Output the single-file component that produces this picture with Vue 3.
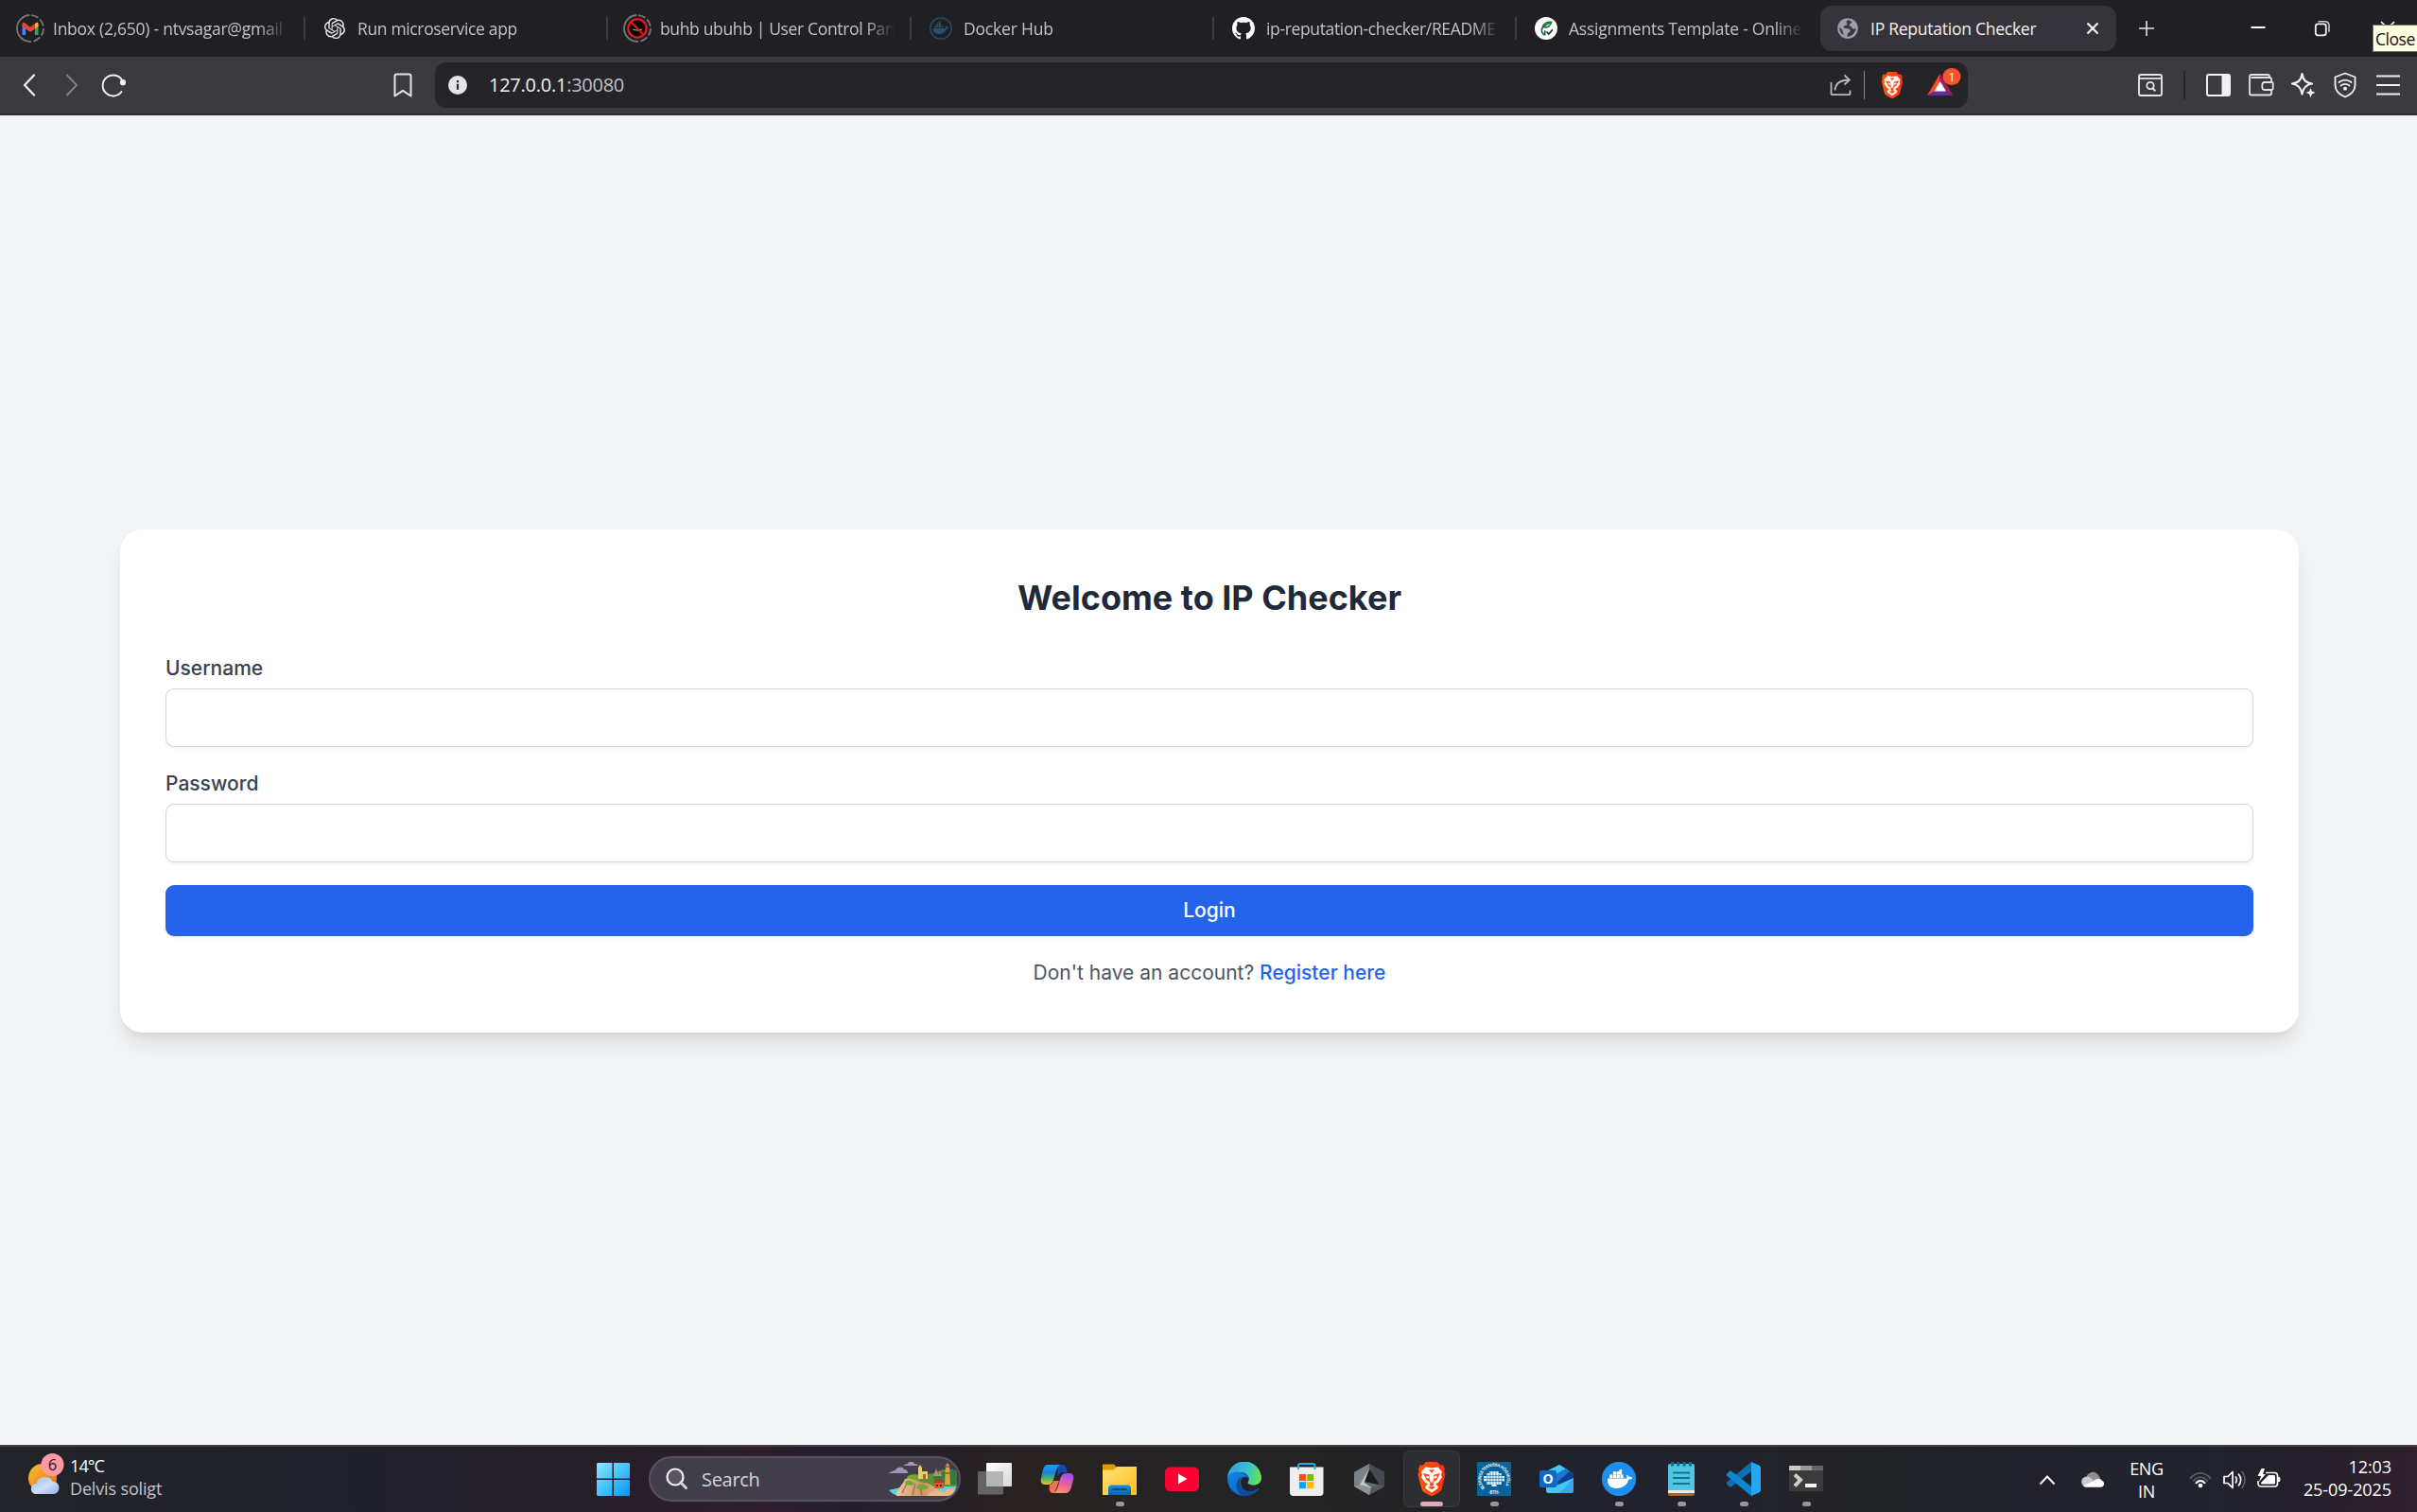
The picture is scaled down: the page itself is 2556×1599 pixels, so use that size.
<script setup>
const taskIndicator = { on: 'dot', active: 'dot wide' }
</script>

<template>
  <div class="screen">
    <!-- Tab strip -->
    <header class="tabs">
      <div class="tab">
        <svg class="fav ring" width="30" height="30" viewBox="0 0 30 30">
          <circle cx="15" cy="15" r="14" fill="none" stroke="#77767b" stroke-width="1.8" stroke-dasharray="8 2.4 8 2.4 8 2.4 8 2.4 44 2.4" transform="rotate(-86 15 15)" />
          <path d="M6.5 11v11h3.6v-8.500z" fill="#4285f4" /><path d="M23.500 11v11h-3.600v-8.500z" fill="#34a853" />
          <path d="M19.900 10.200l1.300-1.200c1.100-.6 2.300 0 2.300 1.500v2.200l-3.600 2.800z" fill="#fbbc04" />
          <path d="M6.500 12.700v-2.200c0-1.500 1.300-2.100 2.400-1.400L15 13.700l4.900-3.700v5.400L15 19.100l-4.900-3.600z" fill="#ea4335" />
        </svg>
        <span class="ttl fade t1">Inbox (2,650) - ntvsagar@gmail</span>
      </div>
      <i class="sep"></i>
      <div class="tab">
        <svg class="fav" width="24" height="24" viewBox="-1 -1 26 26"><path fill="#e8e8e8" d="M22.2819 9.8211a5.9847 5.9847 0 0 0-.5157-4.9108 6.0462 6.0462 0 0 0-6.5098-2.9A6.0651 6.0651 0 0 0 4.9807 4.1818a5.9847 5.9847 0 0 0-3.9977 2.9 6.0462 6.0462 0 0 0 .7427 7.0966 5.98 5.98 0 0 0 .511 4.9107 6.051 6.051 0 0 0 6.5146 2.9001A5.9847 5.9847 0 0 0 13.2599 24a6.0557 6.0557 0 0 0 5.7718-4.2058 5.9894 5.9894 0 0 0 3.9977-2.9001 6.0557 6.0557 0 0 0-.7475-7.0729zm-9.022 12.6081a4.4755 4.4755 0 0 1-2.8764-1.0408l.1419-.0804 4.7783-2.7582a.7948.7948 0 0 0 .3927-.6813v-6.7369l2.02 1.1686a.071.071 0 0 1 .038.052v5.5826a4.504 4.504 0 0 1-4.4945 4.4944zm-9.6607-4.1254a4.4708 4.4708 0 0 1-.5346-3.0137l.142.0852 4.783 2.7582a.7712.7712 0 0 0 .7806 0l5.8428-3.3685v2.3324a.0804.0804 0 0 1-.0332.0615L9.74 19.9502a4.4992 4.4992 0 0 1-6.1408-1.6464zM2.3408 7.8956a4.485 4.485 0 0 1 2.3655-1.9728V11.6a.7664.7664 0 0 0 .3879.6765l5.8144 3.3543-2.0201 1.1685a.0757.0757 0 0 1-.071 0l-4.8303-2.7865A4.504 4.504 0 0 1 2.3408 7.872zm16.5963 3.8558L13.1038 8.364 15.1192 7.2a.0757.0757 0 0 1 .071 0l4.8303 2.7913a4.4944 4.4944 0 0 1-.6765 8.1042v-5.6772a.79.79 0 0 0-.407-.667zm2.0107-3.0231l-.142-.0852-4.7735-2.7818a.7759.7759 0 0 0-.7854 0L9.409 9.2297V6.8974a.0662.0662 0 0 1 .0284-.0615l4.8303-2.7866a4.4992 4.4992 0 0 1 6.6802 4.66zM8.3065 12.863l-2.02-1.1638a.0804.0804 0 0 1-.038-.0567V6.0742a4.4992 4.4992 0 0 1 7.3757-3.4537l-.142.0805L8.704 5.459a.7948.7948 0 0 0-.3927.6813zm1.0976-2.3654l2.602-1.4998 2.6069 1.4998v2.9994l-2.5974 1.4997-2.6067-1.4997Z" /></svg>
        <span class="ttl fade t2">Run microservice app</span>
      </div>
      <i class="sep"></i>
      <div class="tab third">
        <svg class="fav ring" width="30" height="30" viewBox="0 0 30 30">
          <circle cx="15" cy="15" r="14" fill="none" stroke="#77767b" stroke-width="1.800" stroke-dasharray="8 2.4 8 2.4 8 2.4 8 2.4 44 2.4" transform="rotate(-86 15 15)" />
          <circle cx="15" cy="15" r="9.600" fill="#000" stroke="#f01414" stroke-width="2.200" />
          <path d="M9.500 15.300c3 1.600 8 1.600 11 0-1 3-9.500 3-11 0z" fill="#e8e8e8" /><path d="M8.500 8.500l13 13" stroke="#f01414" stroke-width="2.200" />
        </svg>
        <span class="ttl fade t3">buhb ubuhb | User Control Pane</span>
      </div>
      <i class="sep"></i>
      <div class="tab">
        <svg class="fav" width="24" height="24" viewBox="0 0 24 24">
          <circle cx="12" cy="12" r="11.200" fill="none" stroke="#24506c" stroke-width="1.300" />
          <path d="M3.500 12h13.200c.6-.6.5-2-.1-3 1.300.2 1.900 1.100 2 1.900.8-.1 1.500 0 2 .4-.5 1-1.500 1.300-2.600 1.300C17 15.900 14.500 18 10.500 18c-4.500 0-7-2.300-7-6zM5 9.200h2v2H5zM7.400 9.200h2v2h-2zM9.800 9.200h2v2h-2zM12.200 9.200h2v2h-2zM7.400 7h2v2h-2zM9.800 7h2v2h-2zM9.800 4.800h2v2h-2z" fill="#24506c" />
        </svg>
        <span class="ttl fade t4">Docker Hub</span>
      </div>
      <i class="sep"></i>
      <div class="tab">
        <svg class="fav" width="24" height="24" viewBox="0 0 16 16"><path fill="#fff" d="M8 0C3.580 0 0 3.580 0 8c0 3.540 2.290 6.530 5.470 7.590.4.070.55-.170.55-.380 0-.190-.010-.820-.010-1.490-2.010.370-2.530-.490-2.690-.940-.090-.230-.480-.940-.820-1.130-.280-.150-.680-.520-.010-.530.630-.010 1.080.580 1.230.820.720 1.210 1.870.870 2.330.660.070-.520.280-.870.510-1.070-1.780-.200-3.640-.890-3.640-3.950 0-.870.310-1.590.820-2.150-.080-.200-.360-1.020.080-2.120 0 0 .670-.210 2.200.820.640-.180 1.320-.270 2-.270s1.360.090 2 .270c1.530-1.040 2.200-.820 2.200-.820.440 1.100.160 1.920.080 2.120.510.560.820 1.270.820 2.150 0 3.070-1.870 3.750-3.650 3.950.290.250.540.730.540 1.480 0 1.070-.010 1.930-.010 2.200 0 .210.150.460.550.380A8.010 8.010 0 0 0 16 8c0-4.420-3.580-8-8-8z" /></svg>
        <span class="ttl fade t5">ip-reputation-checker/README</span>
      </div>
      <i class="sep"></i>
      <div class="tab">
        <svg class="fav" width="24" height="24" viewBox="0 0 24 24">
          <circle cx="12" cy="12" r="12" fill="#fff" />
          <path d="M10.500 19c-4-2-4.200-7-.5-9.500M8.500 10.500c1-4 5-6 9-5-.5 4-4.500 6.300-8.300 4.900M9.500 10.200c2-2.300 4-3.300 6.500-4M11.300 14.500c-1.200 1.700-1 3.200 0 4.500" fill="none" stroke="#12743c" stroke-width="1.700" />
          <path d="M12.500 15.500l2.400 2.600 4-4.800" fill="none" stroke="#222" stroke-width="1.600" />
        </svg>
        <span class="ttl fade t6">Assignments Template - Online</span>
      </div>
      <div class="active">
        <svg width="24" height="24" viewBox="0 0 24 24">
          <circle cx="12" cy="12" r="10.800" fill="#9aa0a6" />
          <path d="M12.500 3.200c-2 .8-2.300 2.100-1.500 3.500 1 1.500-.5 2.500-2.500 2.500-1.400 0-1 2.300.5 2.700 2.600.7 4.800-.3 5.500 2 .6 2-2.400 2.300-2.700 4.100-.2 1.300-.3 2-.4 2.800 4.500-.3 9.200-4 9.200-8.800-1.800.8-3.800.7-4.300-1-.5-1.600-3-.8-2.500-2.800.3-1.300 2-1.200 2.700-2.600-1-1.500-2.300-2.200-4-2.400zM3.200 11c1.600 1 3.800 2 3.400 4.300 0 1.300 1 1.700 1.100 4C4.900 17.800 3 14.500 3.200 11z" fill="#3a3940" />
        </svg>
        <span class="ttl t7">IP Reputation Checker</span>
        <svg class="tabx" width="14" height="14" viewBox="0 0 14 14"><path d="M1.500 1.500l11 11M12.500 1.500l-11 11" stroke="#f2f2f4" stroke-width="2.200" /></svg>
      </div>
      <svg class="plus" width="18" height="18" viewBox="0 0 18 18"><path d="M9 1v16M1 9h16" stroke="#e4e4e6" stroke-width="1.600" /></svg>
      <svg class="mini" width="16" height="24" viewBox="0 0 16 24"><path d="M0.500 11h15" stroke="#fff" stroke-width="2" /></svg>
      <svg class="rest" width="18" height="18" viewBox="0 0 18 18"><rect x="1.800" y="4.300" width="11" height="12" rx="2.500" fill="none" stroke="#f2f2f4" stroke-width="1.800" /><path d="M4.500 1.800h7c3 0 4.500 1.500 4.500 4.500v6.500" fill="none" stroke="#c8c8cc" stroke-width="1.600" /></svg>
      <svg class="wclose" width="16" height="16" viewBox="0 0 16 16"><path d="M1 1l14 14M15 1L1 15" stroke="#fff" stroke-width="1.700" /></svg>
      <div class="tip"><span>Close</span></div>
    </header>

    <!-- Address bar -->
    <nav class="bar">
      <svg class="back" width="14" height="24" viewBox="0 0 14 24"><path d="M12 1.500L2 12l10 10.500" fill="none" stroke="#f2f2f4" stroke-width="2.200" stroke-linecap="round" stroke-linejoin="round" /></svg>
      <svg class="fwd" width="14" height="24" viewBox="0 0 14 24"><path d="M2 1.500L12 12 2 22.500" fill="none" stroke="#7f7e84" stroke-width="2" stroke-linecap="round" stroke-linejoin="round" /></svg>
      <svg class="reload" width="28" height="26" viewBox="0 0 28 26"><path d="M22.500 8.500A11 11 0 1 0 21.500 20" fill="none" stroke="#f2f2f4" stroke-width="2" stroke-linecap="round" /><circle cx="23" cy="10.200" r="3.100" fill="#f2f2f4" /></svg>
      <svg class="mark" width="20" height="26" viewBox="0 0 20 26"><path d="M1.500 3.500c0-1.200.8-2 2-2h13c1.200 0 2 .8 2 2V24.500L10 18.800 1.500 24.500z" fill="none" stroke="#e4e4e6" stroke-width="2" stroke-linejoin="round" /></svg>
      <div class="url">
        <svg class="info" width="20" height="20" viewBox="0 0 20 20"><circle cx="10" cy="10" r="10" fill="#e3e3e8" /><path d="M10 8.800v6M10 5v2.200" stroke="#29282d" stroke-width="2.200" /></svg>
        <span class="addr">127.0.0.1<em>:30080</em></span>
        <svg class="share" width="24" height="24" viewBox="0 0 24 24"><path d="M1.500 9v11.500c0 1 .7 1.700 1.700 1.700h16.600c1 0 1.700-.7 1.700-1.700V17.500M5.500 17.500C6 10 11 6.500 20.500 6.500M15.500 1.500l5.300 5-5.300 5" fill="none" stroke="#b9b8be" stroke-width="1.800" /></svg>
        <i class="vline"></i>
        <svg class="brave" width="24" height="28" viewBox="0 0 30 36"><use href="#lion" /></svg>
        <svg class="bat" width="38" height="34" viewBox="0 0 38 34">
          <path d="M13.500 7L0 30l8.500-5 5-9z" fill="#ff4724" /><path d="M13.500 7L27.500 30 19 25l-5.500-9z" fill="#9e1f63" /><path d="M0 30h27.500L19 24.500H8.500z" fill="#662d91" /><path d="M13.700 15L20 25.500H7.400z" fill="#fff" />
          <rect x="16.500" y="1" width="19" height="18" rx="9" fill="#fc532a" />
          <text x="26" y="14.800" text-anchor="middle" font-size="13" fill="#fff">1</text>
        </svg>
      </div>
      <svg class="b1" width="28" height="26" viewBox="0 0 28 26"><rect x="2" y="2" width="24" height="22" rx="2" fill="none" stroke="#e4e4e6" stroke-width="1.900" /><path d="M2 6h24" stroke="#e4e4e6" stroke-width="1.800" /><circle cx="14" cy="13.500" r="3.700" fill="none" stroke="#e4e4e6" stroke-width="1.800" /><path d="M16.500 16.200l2.800 3" stroke="#e4e4e6" stroke-width="2" /></svg>
      <i class="vdark"></i>
      <svg class="b2" width="28" height="26" viewBox="0 0 28 26"><rect x="2" y="2" width="24" height="22" rx="2" fill="none" stroke="#f2f2f4" stroke-width="2" /><path d="M17.500 2H26v22h-8.500z" fill="#f2f2f4" /></svg>
      <svg class="b3" width="28" height="26" viewBox="0 0 28 26"><path d="M25 9V7c0-1.300-.9-2-2-2H3.500M2 4v17.500c0 1.300.8 2 2 2h19c1.200 0 2-.8 2-2v-3M2 4c0-1.300.8-2 2-2h17c1.200 0 2 .8 2 2v1M25.500 10h-8c-3 0-3 8 0 8h8c.8 0 1.200-.5 1.200-1.200v-5.600c0-.7-.4-1.200-1.200-1.200z" fill="none" stroke="#e4e4e6" stroke-width="1.800" /></svg>
      <svg class="b4" width="28" height="28" viewBox="0 0 28 28"><path d="M12.500 2c1 6.500 3.500 9.500 10.500 10.500-7 1-9.500 5-10.500 11-1-6-3.500-10-10.500-11C9 11.500 11.500 8.500 12.500 2z" fill="none" stroke="#f2f2f4" stroke-width="2.200" stroke-linejoin="round" /><path d="M21.500 17l1.400 3.500 3.800 1.500-3.800 1.500-1.400 3.800-1.400-3.800-3.600-1.500 3.600-1.500z" fill="#f2f2f4" /></svg>
      <svg class="b5" width="24" height="28" viewBox="0 0 24 28"><path d="M12 1.500l10.500 4v8.500c0 6-5 10.300-10.500 12.500C6.500 24.300 1.500 20 1.500 14V5.500z" fill="none" stroke="#f2f2f4" stroke-width="1.800" stroke-linejoin="round" /><path d="M5.500 11c3.800-3.200 9.200-3.200 13 0M7.500 14.500c2.800-2 6.200-2 9 0" fill="none" stroke="#f2f2f4" stroke-width="1.800" stroke-linecap="round" /><circle cx="12" cy="17.800" r="2" fill="#f2f2f4" /></svg>
      <svg class="b6" width="25" height="22" viewBox="0 0 25 22"><path d="M0 1.500h25M0 11h25M0 20.500h25" stroke="#f2f2f4" stroke-width="1.900" /></svg>
    </nav>

    <!-- Login page -->
    <main class="page">
      <form class="card" @submit.prevent>
        <h2>Welcome to IP Checker</h2>
        <label for="user">Username</label>
        <input id="user" type="text" />
        <label for="pass" class="second">Password</label>
        <input id="pass" type="password" />
        <button type="submit">Login</button>
        <p>Don't have an account? <a>Register here</a></p>
      </form>
    </main>

    <!-- Taskbar -->
    <footer class="task">
      <div class="weather">
        <svg width="40" height="42" viewBox="0 0 40 42">
          <defs>
            <linearGradient id="sun" x1="0" y1="0" x2="1" y2="1"><stop offset="0" stop-color="#f6c136" /><stop offset="1" stop-color="#f0660d" /></linearGradient>
            <linearGradient id="cl" x1="0" y1="0" x2="1" y2="1"><stop offset="0" stop-color="#9dc0f5" /><stop offset=".55" stop-color="#cfdcf5" /><stop offset="1" stop-color="#8faee8" /></linearGradient>
          </defs>
          <circle cx="17" cy="26" r="15" fill="url(#sun)" />
          <path d="M10.500 44c-7.500 0-7.500-11 0-11 1-8.500 15-9.500 17-2 9-1 9.500 13 .5 13z" transform="translate(0 -1)" fill="url(#cl)" />
          <circle cx="27.500" cy="12" r="12" fill="#ff99a4" />
          <text x="27.500" y="18" text-anchor="middle" font-size="16.500" fill="#1a1a1a">6</text>
        </svg>
        <div class="wt"><b>14°C</b><span>Delvis soligt</span></div>
      </div>

      <div class="dock">
        <svg class="start" width="35" height="35" viewBox="0 0 35 35">
          <defs><linearGradient id="win" x1="0" y1="0" x2="1" y2="1"><stop offset="0" stop-color="#8fe2ff" /><stop offset=".5" stop-color="#42c4fb" /><stop offset="1" stop-color="#0a93fb" /></linearGradient></defs>
          <path fill="url(#win)" d="M1 0h15.500v16.500H0V1zM18 0h16l1 1v15.500H18zM0 18h16.500v17H1l-1-1zM18 18h17v16l-1 1H18z" />
        </svg>
        <div class="search">
          <svg width="24" height="24" viewBox="0 0 24 24"><circle cx="10" cy="10" r="8.500" fill="#5a5560" stroke="#f0f0f2" stroke-width="2.200" /><path d="M16 16l5.500 5.500" stroke="#d8d8dc" stroke-width="3" stroke-linecap="round" /></svg>
          <span>Search</span>
          <svg class="art" width="74" height="36" viewBox="0 0 74 36">
            <defs><linearGradient id="rock" x1="0" y1="0" x2="1" y2="0"><stop offset="0" stop-color="#f0c795" /><stop offset=".5" stop-color="#c8966b" /><stop offset="1" stop-color="#e8bd8c" /></linearGradient></defs>
            <path d="M0 12c3-1 5-3 8-3 1-4 8-5 9-1 3 0 4 2 4 4zM16 4c2-1 3-2 5-2 1-3 6-3 7 0 2 0 4 1 4 2z" fill="#a792b5" />
            <path d="M1 30c6-2 20-4 30-4s30-4 42-2c-1 6-4 11-11 12H12C6 35 3 32 1 30z" fill="#63cfdc" />
            <path d="M20 16c8-5 20-2 28-4 6-3 17-7 25-2v16H20z" fill="#5d8f35" /><path d="M48 15c8-4 18-7 25-6v15H50z" fill="#397a3c" />
            <path d="M9 36c0-8 6-10 9-18 8-3 15 4 20 4 8 0 12 7 18 9 4 1 6 3 5 5z" fill="url(#rock)" />
            <path d="M15 33l6-12M26 35l3-12M36 35l-2-9" stroke="#a57551" stroke-width="1.500" />
            <path d="M18 22c2-4 7-3 10 1-3 3-8 2-10-1zM30 27c3-5 10-4 13 0-4 3-10 3-13 0zM20 16c4-4 12-3 15 2-4 3-10 1-15-2z" fill="#74a82a" />
            <path d="M32 18V6l2-3 2 3v4h6v8z" fill="#f0c76b" /><path d="M37 18v-5h3v5z" fill="#a66c38" />
            <path d="M48 15l3-8 3 8zM53 15l2-6 2 6z" fill="#b98b74" />
            <path d="M60 24l1-20 2-3 2 3 1 20z" fill="#d9a548" /><path d="M60 5h6M60.500 12h5" stroke="#895a25" stroke-width="1.500" />
            <path d="M49 22h10v6H49z" fill="#de5a33" /><path d="M48 22l2-3h8l2 3z" fill="#a93e2b" /><path d="M51 24h2v2h-2zM55 24h2v2h-2z" fill="#5a2418" />
            <path d="M42 36c2-6 13-6 17-3l4-5 8 1c-2 5-4 7-9 7z" fill="#eeb888" />
          </svg>
        </div>
        <div class="ic">
          <svg width="36" height="36" viewBox="0 0 36 36">
            <defs><linearGradient id="tv" x1="0" y1="0" x2="1" y2="1"><stop offset="0" stop-color="#fff" /><stop offset="1" stop-color="#d8d8d8" /></linearGradient></defs>
            <rect x="9" y="1" width="27" height="25" rx="1" fill="url(#tv)" /><rect x="0" y="10" width="27" height="24.500" rx="1" fill="#6f6f6f" fill-opacity=".85" /><path d="M9 10h18v16H9z" fill="#b5b5b5" />
          </svg>
        </div>
        <div class="ic">
          <svg width="36" height="36" viewBox="0 0 36 36">
            <defs>
              <linearGradient id="cpa" x1="0" y1="0" x2="0" y2="1"><stop offset="0" stop-color="#1d9bf0" /><stop offset=".4" stop-color="#1683df" /><stop offset=".7" stop-color="#4bb566" /><stop offset="1" stop-color="#f2c81d" /></linearGradient>
              <linearGradient id="cpb" x1=".5" y1="0" x2=".2" y2="1"><stop offset="0" stop-color="#a24df0" /><stop offset=".5" stop-color="#ec6098" /><stop offset="1" stop-color="#fb9468" /></linearGradient>
            </defs>
            <path d="M18 3h6c2 0 3 2 3.600 4l1.200 4h-5c-3 0-4 2-5 5z" fill="#1447b8" />
            <path d="M8 3h14c-4 1-5 6-6.500 11S13 24 9 24H5c-4 0-5-3-4-7l2-9c1-3 2-5 5-5z" fill="url(#cpa)" />
            <path d="M10 24c2 0 3-1 4-4h6l-3 8c-1 3-2 5-4 5-2 0-3-2-3.500-4z" fill="#f3734f" />
            <path d="M28 12h3c4 0 5 3 4 7l-2.500 9c-1 3-3 5-6 5H13c4-1 5-4 7-11s3-10 8-10z" fill="url(#cpb)" />
          </svg>
        </div>
        <div class="ic">
          <svg width="36" height="36" viewBox="0 0 36 36">
            <defs><linearGradient id="fo" x1="0" y1="0" x2="1" y2="1"><stop offset="0" stop-color="#ffdf7a" /><stop offset="1" stop-color="#fdc11e" /></linearGradient><linearGradient id="fb" x1="0" y1="0" x2="0" y2="1"><stop offset="0" stop-color="#1a8ce0" /><stop offset="1" stop-color="#0b62b5" /></linearGradient></defs>
            <path d="M0 2.500h12l3.500 3.500L13 9H0z" fill="#dd9b00" /><path d="M0 8.500h11.500L15.500 5H36v30H0z" fill="url(#fo)" /><path d="M6 35v-7c0-2 1.500-3.500 3.500-3.500h17c2 0 3.500 1.500 3.500 3.500v7z" fill="url(#fb)" /><path d="M10.500 29h15" stroke="#07427f" stroke-width="1.800" />
          </svg><i :class="taskIndicator.on"></i>
        </div>
        <div class="ic"><svg width="36" height="36" viewBox="0 0 36 36"><rect y="5.500" width="36" height="25.500" rx="5.500" fill="#fe0032" /><path d="M14 12.500v11l9.500-5.500z" fill="#fff" /></svg></div>
        <div class="ic">
          <svg width="36" height="36" viewBox="0 0 36 36">
            <defs><linearGradient id="ea" x1="0" y1=".3" x2="1" y2=".5"><stop offset="0" stop-color="#2c9fe6" /><stop offset=".55" stop-color="#35c1d5" /><stop offset="1" stop-color="#68e151" /></linearGradient><linearGradient id="eb" x1="0" y1="0" x2=".5" y2="1"><stop offset="0" stop-color="#1481db" /><stop offset="1" stop-color="#0a6ccf" /></linearGradient></defs>
            <path d="M0 18A18 18 0 0 1 36 17c0 5-4 7.500-8 7.500-4 0-6.500-1.300-6.500-2.500 0-.8 1.300-1.500 1.300-4 0-3.500-3.800-7-9.300-7C7 11 1 13 0 18z" fill="url(#ea)" />
            <path d="M0 18C1 12 8 9 13.500 11c5 1 9 4.500 9.300 7-1-2.600-8.300-3.800-8.800 2.500C13.800 27 18 33 25 34.500A18 18 0 0 1 0 18z" fill="url(#eb)" />
            <path d="M17 15c-4 2-5 6-2.500 10.500S22 32 27 30.500c3-1 5.500-2.800 6.200-2.300 1 .8-5 7.800-15.200 7.800-6-1-10-8-8-14 1-4 4-6 7-7z" fill="#104a96" />
          </svg>
        </div>
        <div class="ic">
          <svg width="36" height="36" viewBox="0 0 36 36"><path d="M0 5.500h35.500v27c0 2-1.500 3.500-3.500 3.500H3.500C1.500 36 0 34.500 0 32.500z" fill="#eeeeef" /><path d="M9 8V4c0-1.500.8-2 2-2h13.500c1.200 0 2 .5 2 2v4" fill="none" stroke="#27a9ea" stroke-width="2" /><path d="M10 13h7v7h-7z" fill="#f25022" /><path d="M18.200 13h7v7h-7z" fill="#7fba00" /><path d="M10 21.200h7v7h-7z" fill="#00a4ef" /><path d="M18.200 21.200h7v7h-7z" fill="#ffb900" /></svg>
        </div>
        <div class="ic">
          <svg width="36" height="36" viewBox="0 0 36 36"><path d="M18 2l16 9v15l-16 9-16-9V11z" fill="#666b73" /><path d="M18 2l16 9v15l-5-2L18.500 7z" fill="#454951" /><path d="M18 2L2 11v15l6-2L17.500 7z" fill="#7c828b" /><path d="M2 26l16 9 3-8-11-4z" fill="#8e949c" /><path d="M18 35l16-9-5-1.500-9 2.500z" fill="#555a62" /><path d="M18.500 7.500L29 24.500 13 21z" fill="#1c1d20" /><path d="M18.300 6L8 24l13 3.500-8.500-5.500z" fill="#c4c8cd" /></svg>
        </div>
        <div class="ic on">
          <svg width="30" height="36" viewBox="0 0 30 36">
            <defs><linearGradient id="bg" x1="0" y1="0" x2="1" y2="0"><stop offset="0" stop-color="#ff5500" /><stop offset=".45" stop-color="#ff4a0c" /><stop offset="1" stop-color="#ff2a12" /></linearGradient></defs>
            <g id="lion">
              <path d="M9 0h12l3 3.500h3.500L29 8l-.8 2.500L29.500 13l-4 16c-.4 1.500-1.500 2.500-2.700 3.200L15 36.500l-7.800-4.300C6 31.500 4.900 30.500 4.500 29l-4-16 1.300-2.500L1 8l1.500-4.500H6z" fill="url(#bg)" />
              <path d="M8.500 5.500l6.500 1 6.500-1 4.500 5-1 3.500 1 2-4 6-3 1 3 3.500-1 2-6 4-6-4-1-2 3-3.500-3-1-4-6 1-2-1-3.500z" fill="#fff" />
              <path d="M6 12l6.500 1.500.8 7L15 22l1.700-1.500.8-7L24 12l-3.500 7-4 3 .8 2.500-2.300 2-2.300-2 .8-2.500-4-3zM11 27l4 2.200 4-2.200-4-1.500zM12 8l3 4 3-4-3 .6z" fill="#ff4a13" />
              <path d="M9.500 15.500l3 1.200M20.500 15.500l-3 1.200" stroke="#fff" stroke-width="2" />
            </g>
          </svg><i :class="taskIndicator.active"></i>
        </div>
        <div class="ic">
          <svg width="36" height="36" viewBox="0 0 36 36">
            <path d="M0 0h36v36H0z" fill="#04639b" />
            <defs><path id="arc" d="M8.300 27.700A13.600 13.600 0 1 1 27.700 27.700" /></defs>
            <text font-size="4.500" font-weight="700" fill="#e7f1f7" textLength="60"><textPath href="#arc" textLength="60">BLEKINGE TEKNISKA HÖGSKOLA</textPath></text>
            <text x="18" y="34" font-size="4.500" font-weight="700" fill="#e7f1f7" text-anchor="middle">·BTH·</text>
            <path d="M13 10h10v2h3v3h3v6h-3v3h-6l1 2h-6l1-2h-6v-3H7v-6h3v-3h3z" fill="#e7f1f7" />
            <path d="M7 14.500h22M7 17.500h22M7 20.500h22M11 12v12M14 10v14M17 10v14M20 10v14M23 10v14M26 12v12" stroke="#04639b" stroke-width=".6" />
          </svg><i :class="taskIndicator.on"></i>
        </div>
        <div class="ic">
          <svg width="36" height="36" viewBox="0 0 36 36"><path d="M8 10L21 3l15 9v18c0 2-1 3-3 3H11c-2 0-3-1-3-3z" fill="#1279cb" /><path d="M9 9l12-6 8 5-12 9z" fill="#46c3ef" /><path d="M18 20l13-11 5 3v6L22 28z" fill="#103f91" /><path d="M12 16l16-9 4 3-14 12z" fill="#1a77d4" /><path d="M7 27l11-2 18-8v13c0 2-1 3-3 3H10c-2 0-3-1-3-3z" fill="#42c8f3" /><path d="M36 17v13c0 2-1 3-3 3H21z" fill="#3aa6ee" /><rect y="9" width="18" height="18" rx="2" fill="#1067c4" /><text x="9" y="23" font-family="Open Sans" font-size="14" font-weight="700" fill="#fff" text-anchor="middle">O</text></svg>
        </div>
        <div class="ic">
          <svg width="36" height="36" viewBox="0 0 36 36"><circle cx="18" cy="18" r="18" fill="#1d90ed" /><path d="M6 17.500h20c.8-1 .5-2.500-.3-3.800 1.800.2 2.500 1.200 2.800 2.200 1.200-.2 2.800 0 4 .8-.8 1.500-2.300 2-4 1.900C26.500 25 22 28 15.500 28 9 28 5.500 24.500 6 17.500zM8 13.500h3.300V17H8zM11.800 13.500h3.300V17h-3.300zM15.600 13.500h3.300V17h-3.300zM19.400 13.500h3.300V17h-3.300zM11.800 10.300h3.300v3h-3.300zM15.600 10.300h3.300v3h-3.300zM18.500 8h2.700v5.200h-2.700z" fill="#fff" /></svg>
          <i :class="taskIndicator.on"></i>
        </div>
        <div class="ic">
          <svg width="36" height="36" viewBox="0 0 36 36"><path d="M4 30h28v4c0 1-.7 2-2 2H6c-1.300 0-2-1-2-2z" fill="#b85f12" /><path d="M4 28h28v5H4z" fill="#ecebeb" /><path d="M4 4c0-1 .7-2 2-2h24c1.300 0 2 1 2 2v26H4z" fill="#52c4e0" /><path d="M9 11.500h18M9 17h18M9 23h18" stroke="#0b7596" stroke-width="2" /><path d="M8.500 0v4.500M14.800 0v4.500M21.200 0v4.500M27.500 0v4.500" stroke="#087191" stroke-width="3" /></svg>
          <i :class="taskIndicator.on"></i>
        </div>
        <div class="ic">
          <svg width="36" height="36" viewBox="0 0 36 36"><path d="M26 0v10L4 27l-4-3.500v-2z" fill="#0b6fb5" /><path d="M0 12.500L4 9l22 17v10L0 14.500z" fill="#0f86d2" /><path d="M26 0l8 3.500c1.300.6 2 1.500 2 3v23c0 1.500-.7 2.500-2 3L26 36z" fill="#26a5f0" /></svg>
          <i :class="taskIndicator.on"></i>
        </div>
        <div class="ic">
          <svg width="36" height="36" viewBox="0 0 36 36"><path d="M0 8h36v21.500c0 1-.5 1.500-1.500 1.500h-33C.5 31 0 30.500 0 29.500z" fill="#3b3b3b" /><path d="M0 9V5.500c0-1 .5-1.500 1.500-1.500H12v5z" fill="#ccc" /><path d="M12 4h12v5H12z" fill="#999" /><path d="M24 4h10.500c1 0 1.500.5 1.500 1.500V9H24z" fill="#666" /><path d="M6 13.500l6 5.500-6 6.500" fill="none" stroke="#cfcfcf" stroke-width="4" /><path d="M17 23h12v4H17z" fill="#f5f5f5" /></svg>
          <i :class="taskIndicator.on"></i>
        </div>
      </div>

      <div class="tray">
        <svg class="chev" width="18" height="12" viewBox="0 0 18 12"><path d="M1.500 10.500L9 2.500l7.500 8" fill="none" stroke="#fff" stroke-width="2" /></svg>
        <svg class="od" width="24" height="18" viewBox="0 0 24 18"><path d="M4 11C5-1 17-3 20 8l-8 6z" fill="#8e8e90" /><path d="M5 16.500C-1 16-2 6 6 5.500c3 0 4 1.500 7 4L7 15z" fill="#c9c9cb" /><path d="M2.500 15L14 9.500c2-2 7-2 7.500 0 3.500 1 3.500 7-1 7.300H5c-1.500 0-2-.8-2.500-1.800z" fill="#fff" /></svg>
        <div class="lang"><span>ENG</span><span>IN</span></div>
        <svg class="wifi" width="24" height="18" viewBox="0 0 24 18"><path d="M1 8c6-8.300 16-8.300 22 0M4.300 10.500c4-5.700 11.400-5.700 15.400 0" fill="none" stroke="#5d5d66" stroke-width="1.700" /><path d="M7 13c2.500-4 7.500-4 10 0" fill="none" stroke="#fff" stroke-width="2" /><circle cx="12" cy="15" r="2.300" fill="#fff" /></svg>
        <svg class="vol" width="24" height="20" viewBox="0 0 24 20"><path d="M1 6.500h4L10 1.500v17L5 13.500H1z" fill="none" stroke="#fff" stroke-width="1.700" stroke-linejoin="round" /><path d="M13 6.500c1.500 2 1.500 5 0 7M16 3.500c3.300 4 3.300 9 0 13" fill="none" stroke="#fff" stroke-width="1.700" /><path d="M19.500 1c4.500 5 4.500 13 0 18" fill="none" stroke="#5d5d66" stroke-width="1.600" /></svg>
        <svg class="batt" width="25" height="21" viewBox="0 0 25 21"><path d="M9 4.500h9.500c1.800 0 3 1.200 3 3v8.500c0 1.800-1.200 3-3 3H4c-1.800 0-3-1.200-3-3v-3" fill="none" stroke="#fff" stroke-width="1.600" /><path d="M12 7h5.500c1 0 1.500.5 1.500 1.500V15c0 1-.5 1.500-1.500 1.500h-12c-1 0-1.500-.5-1.500-1.500z" fill="#fff" /><path d="M22 9h1.500c1.300 0 1.300 5 0 5H22zM4.500 0L.5 8H4l-2 6 7-8H6l2-6z" fill="#fff" /></svg>
        <div class="clock"><span>12:03</span><span class="date">25-09-2025</span></div>
      </div>
    </footer>
  </div>
</template>

<style>
body { margin: 0; overflow: hidden; }
</style>

<style scoped>
.screen { width: 2556px; height: 1599px; display: flex; flex-direction: column; overflow: hidden; font-family: "Open Sans", "Noto Sans", sans-serif; background: #f3f4f6; }
svg { display: block; flex: none; }
i { flex: none; }

.tabs { height: 60px; background: #201f24; display: flex; align-items: center; position: relative; flex: none; }
.tab { width: 319px; display: flex; align-items: center; padding-left: 20px; box-sizing: border-box; flex: none; }
.tab:first-child { width: 321px; padding-left: 20px; }
.tab.third { width: 320px; }
.tab .fav.ring { margin: 0 -3px; }
.sep { width: 2px; height: 24px; background: #3b3a40; margin-right: -1px; }
.ttl { font-size: 17.500px; line-height: 24px; white-space: nowrap; color: #c3c2c7; margin-left: 12px; }
.fade { width: 258px; -webkit-mask-image: linear-gradient(90deg, #000 218px, transparent 248px); mask-image: linear-gradient(90deg, #000 218px, transparent 248px); }
.t1 { letter-spacing: -0.250px; }
.t2, .t3, .t5 { letter-spacing: -0.350px; }
.t4 { letter-spacing: -0.200px; }
.t6, .t7 { letter-spacing: -0.250px; }
.active { width: 313px; height: 48px; margin-left: 3px; border-radius: 12px; background: #35343a; display: flex; align-items: center; box-sizing: border-box; padding-left: 17px; flex: none; }
.active .ttl { color: #f2f2f4; width: 216px; }
.tabx { margin-left: 12px; }
.plus { margin-left: 23px; }
.mini { margin-left: 101px; }
.rest { margin-left: 51px; }
.wclose { margin-left: 52px; }
.tip { position: absolute; left: 2509px; top: 26px; width: 60px; height: 29px; box-sizing: border-box; border: 1px solid #75756a; background: #ffffe1; color: #111; font-size: 17.500px; line-height: 29px; padding-left: 2px; letter-spacing: -0.450px; }

.bar { height: 62px; box-sizing: border-box; border-bottom: 2px solid #2c2b30; background: #3b3a3f; display: flex; align-items: center; flex: none; }
.back { margin-left: 24px; }
.fwd { margin-left: 31px; }
.reload { margin-left: 24px; }
.mark { margin-left: 281px; }
.url { width: 1621px; height: 48px; margin-left: 24px; border-radius: 12px; background: #252429; display: flex; align-items: center; flex: none; }
.info { margin-left: 14px; }
.addr { margin-left: 23px; margin-top: -1px; font-size: 20px; color: #f2f2f4; letter-spacing: -0.250px; width: 300px; }
.addr em { font-style: normal; color: #c2c1c8; }
.share { margin-left: 1118px; }
.vline { width: 1px; height: 30px; margin-left: 12px; background: #8a8990; }
.brave { margin-left: 17px; }
.bat { margin-left: 25px; margin-top: -4px; }
.b1 { margin-left: 179px; }
.vdark { width: 2px; height: 30px; margin-left: 21px; background: #26252a; }
.b2 { margin-left: 21px; }
.b3 { margin-left: 17px; }
.b4 { margin-left: 17px; }
.b5 { margin-left: 18px; }
.b6 { margin-left: 21px; }

.page { flex: 1; min-height: 0; padding: 438px 125px 0 127px; background: #f3f4f6; font-family: Inter, sans-serif; }
.card { box-sizing: border-box; height: 532px; padding: 48px; background: #fff; border-radius: 24px; box-shadow: 0 15px 22.500px -4.500px rgba(0, 0, 0, .1), 0 6px 9px -6px rgba(0, 0, 0, .1); display: flex; flex-direction: column; }
h2 { margin: 0 0 36px; font-size: 36px; line-height: 48px; font-weight: 700; color: #1f2937; text-align: center; }
label { font-size: 21px; line-height: 30px; font-weight: 500; color: #374151; }
.second { margin-top: 24px; }
input { box-sizing: border-box; height: 62px; margin-top: 6px; border: 1px solid #d1d5db; border-radius: 9px; background: #fff; box-shadow: 0 1.500px 3px rgba(0, 0, 0, .05); outline: none; padding: 0 18px; font: inherit; }
button { height: 54px; margin-top: 24px; border: 0; border-radius: 9px; background: #2563eb; color: #fff; font: 500 21px/30px Inter, sans-serif; box-shadow: 0 1.500px 3px rgba(0, 0, 0, .05); }
p { margin: 24px 0 0; font-size: 21px; line-height: 30px; color: #4b5563; text-align: center; }
a { color: #2563eb; font-weight: 500; }

.task { position: relative; height: 71px; flex: none; box-sizing: border-box; border-top: 2px solid #414045; display: flex; align-items: flex-start; background: linear-gradient(90deg, #222429 0, #20202b 400px, #261f29 630px, #2e1d2c 810px, #221e2e 900px, #292221 1080px, #252324 1250px, #222325 1500px, #21212d 1680px, #22222c 1850px, #222326 1950px, #20212b 2150px, #20232d 2330px, #241f2b 2430px, #301f2d 2556px); }
.weather { display: flex; align-items: flex-start; margin-left: 28px; margin-top: 8px; width: 603px; height: 50px; }
.weather svg { margin-top: -1px; overflow: visible; }
.wt { display: flex; flex-direction: column; margin-left: 6px; font-size: 18px; line-height: 24px; color: #c4c4c9; letter-spacing: -0.150px; }
.wt b { font-weight: 400; color: #fff; letter-spacing: -0.900px; }
.dock { display: flex; align-items: center; height: 68px; }
.search { width: 330px; height: 48px; box-sizing: border-box; margin-left: 20px; margin-right: 6px; border: 2px solid #57525e; border-radius: 24px; background: #413e4a; display: flex; align-items: center; padding-left: 16px; }
.search span { margin-left: 14px; font-size: 20px; color: #d4d4d8; letter-spacing: -0.300px; width: 120px; }
.art { margin-left: 77px; }
.ic { position: relative; width: 60px; height: 60px; margin: 0 3px; display: flex; align-items: center; justify-content: center; box-sizing: border-box; }
.search + .ic { margin-left: 0; }
.on { background: #2d2e31; border-radius: 7px; box-shadow: inset 0 0 0 1px #3a3b3e; }
.dot { position: absolute; left: 26px; bottom: 1px; width: 9px; height: 5px; border-radius: 3px; background: #98989b; }
.wide { left: 18px; width: 24px; background: #dfabb3; }
.tray { margin-left: auto; display: flex; align-items: center; height: 69px; color: #fff; font-size: 18px; line-height: 24px; }
.od { margin-left: 27px; }
.lang { margin-left: 26px; width: 38px; text-align: center; display: flex; flex-direction: column; letter-spacing: -0.400px; margin-top: 1px; }
.wifi { margin-left: 26px; }
.vol { margin-left: 12px; }
.batt { margin-left: 12px; margin-top: -3px; }
.clock { width: 117px; margin-right: 27px; margin-top: -3px; text-align: right; display: flex; flex-direction: column; letter-spacing: -0.080px; }
</style>
